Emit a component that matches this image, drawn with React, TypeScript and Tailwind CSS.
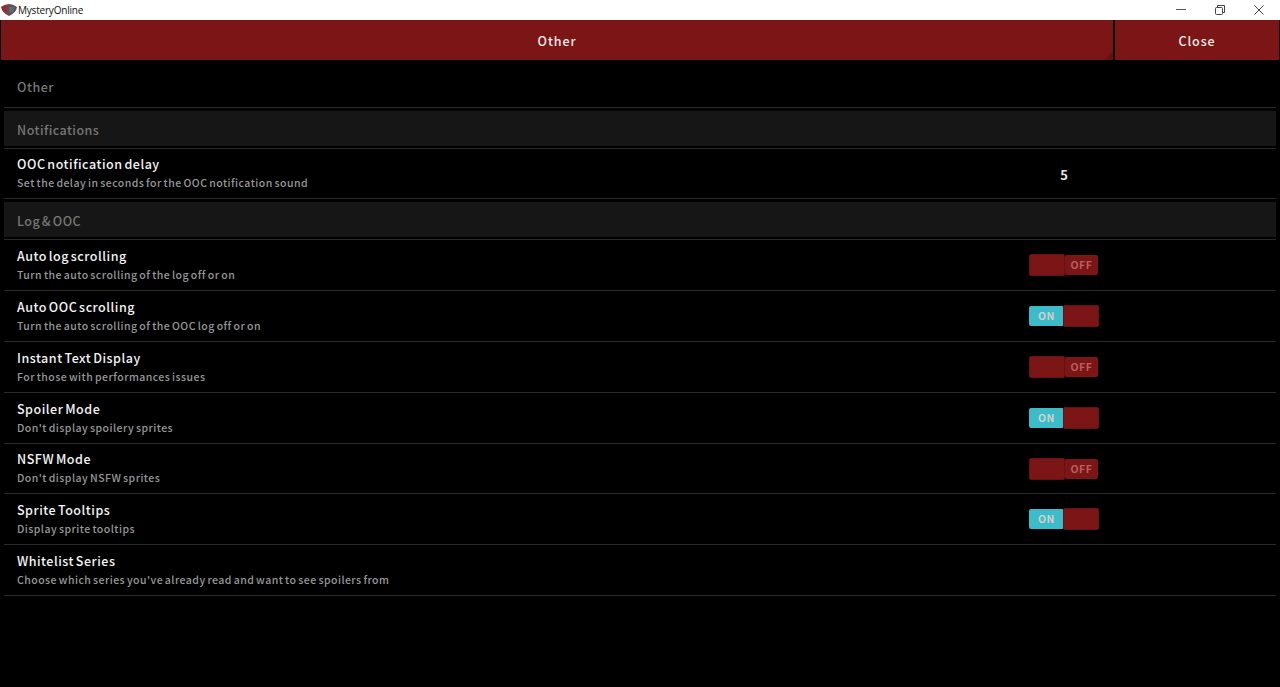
import React from "react";

const font = { fontFamily: '"Noto Sans CJK JP", "Noto Sans", sans-serif' };

function Toggle({ on }: { on: boolean }) {
  if (on) {
    return (
      <div className="flex items-center w-[70px] h-[22px]">
        <div className="w-[35px] h-[20px] bg-[#3cbcc8] rounded-[2px] flex items-center justify-center text-[10.5px] font-bold tracking-[0.6px] text-[#d0d0d0]">ON</div>
        <div className="w-[36px] h-[22px] -ml-[1px] bg-[#7c1616] rounded-[2px] border border-[#661212]" />
      </div>
    );
  }
  return (
    <div className="flex items-center w-[70px] h-[22px]">
      <div className="w-[36px] h-[22px] bg-[#7c1616] rounded-[2px] border border-[#661212]" />
      <div className="w-[33px] h-[20px] bg-[#7c1616] rounded-[2px] flex items-center justify-center text-[10.5px] font-bold tracking-[0.6px] text-[#b86060]">OFF</div>
    </div>
  );
}

function Row({ title, sub, right, h = "h-[51px]" }: { title: string; sub: string; right?: React.ReactNode; h?: string }) {
  return (
    <div className={`${h} border-b border-[#2a2a2a] flex items-center pl-[13px]`}>
      <div className="flex-1 flex flex-col">
        <div className="text-[12.5px] leading-[19px] font-medium tracking-[0.52px] [word-spacing:-1.5px] text-[#f4f4f4]">{title}</div>
        <div className="mt-[1px] mb-[1px] text-[10.5px] leading-[18px] font-medium tracking-[0.46px] [word-spacing:-1px] text-[#989898]">{sub}</div>
      </div>
      <div className="w-[70px] mr-[177px] flex items-center justify-center">{right}</div>
    </div>
  );
}

function Section({ title }: { title: string }) {
  return (
    <div className="h-[38px] border-b border-[#2a2a2a] flex flex-col">
      <div className="h-[35px] bg-[#161616] flex items-center pl-[13px] pt-[3px] text-[12.5px] font-medium tracking-[0.45px] [word-spacing:-1.5px] text-[#777777]">{title}</div>
    </div>
  );
}

export default function App() {
  return (
    <div className="w-[1280px] h-[687px] bg-black overflow-hidden flex flex-col" style={font}>
      <div className="h-[20px] bg-white flex items-center shrink-0">
        <svg width="16" height="14" viewBox="0 0 16 14" className="ml-[1px]">
          <path d="M0 4 Q4 1 8 1 Q12 1 16 4 Q15 10 8 13 Q1 10 0 4 Z" fill="#6a4a50" />
          <path d="M0 4 L5 2 L6 8 L3 9 Z" fill="#9a2a30" />
          <path d="M8 4 L14 4 L12 9 L8 10 Z" fill="#4f7078" />
        </svg>
        <span className="ml-[1px] text-[10px] tracking-[-0.2px] text-[#111]" style={{ fontFamily: '"Open Sans", sans-serif' }}>MysteryOnline</span>
        <div className="ml-auto flex items-center h-full">
          <svg width="10" height="10" viewBox="0 0 10 10" className="mr-[29px]"><path d="M0 4.5H10" stroke="#555" strokeWidth="1" /></svg>
          <svg width="10" height="10" viewBox="0 0 10 10" className="mr-[29px]" fill="none" stroke="#444"><rect x="0.5" y="2.5" width="7" height="7" rx="1" /><path d="M2.5 2V0.5H9.5V7.5H8" /></svg>
          <svg width="10" height="10" viewBox="0 0 10 10" className="mr-[16px]"><path d="M0.5 0.5L9.5 9.5M9.5 0.5L0.5 9.5" stroke="#444" strokeWidth="1" /></svg>
        </div>
      </div>

      <div className="h-[40px] flex shrink-0 pl-[1px] pr-[1px] gap-[2px] text-[12.5px] font-medium tracking-[0.9px] text-[#ececec]">
        <div className="relative w-[1112px] bg-[#7c1616] flex items-center justify-center pt-[3px]">
          Other
          <div className="absolute right-0 bottom-0 w-0 h-0 border-l-[9px] border-l-transparent border-b-[9px] border-b-[#641212]" />
        </div>
        <div className="flex-1 bg-[#7c1616] flex items-center justify-center pt-[3px]">Close</div>
      </div>

      <div className="mx-[4px] w-[1272px] flex flex-col">
        <div className="h-[48px] border-b border-[#2a2a2a] flex items-center pl-[13px] pt-[7px] text-[12.5px] font-medium tracking-[0.5px] text-[#777777]">Other</div>
        <div className="pt-[3px]"><Section title="Notifications" /></div>
        <Row title="OOC notification delay" sub="Set the delay in seconds for the OOC notification sound" h="h-[50px]" right={<span className="pt-[2px] text-[13px] font-bold text-[#e6e6e6]">5</span>} />
        <div className="pt-[3px]"><Section title="Log & OOC" /></div>
        <Row title="Auto log scrolling" sub="Turn the auto scrolling of the log off or on" right={<Toggle on={false} />} />
        <Row title="Auto OOC scrolling" sub="Turn the auto scrolling of the OOC log off or on" right={<Toggle on />} />
        <Row title="Instant Text Display" sub="For those with performances issues" right={<Toggle on={false} />} />
        <Row title="Spoiler Mode" sub="Don't display spoilery sprites" right={<Toggle on />} />
        <Row title="NSFW Mode" sub="Don't display NSFW sprites" h="h-[50px]" right={<Toggle on={false} />} />
        <Row title="Sprite Tooltips" sub="Display sprite tooltips" right={<Toggle on />} />
        <Row title="Whitelist Series" sub="Choose which series you've already read and want to see spoilers from" />
      </div>
    </div>
  );
}
